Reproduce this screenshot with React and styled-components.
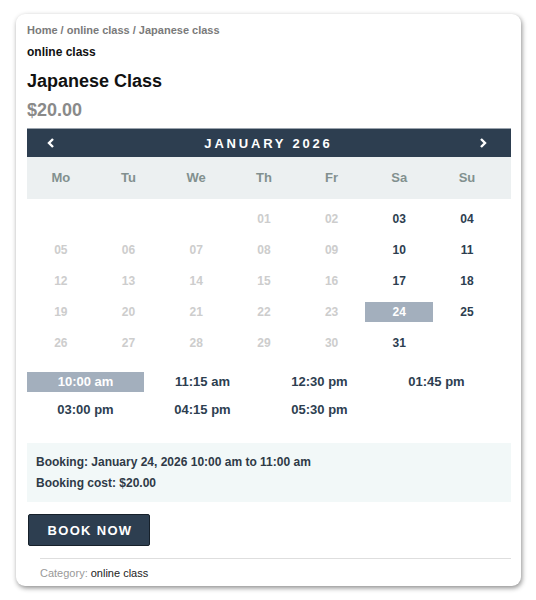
import React from 'react';
import styled, { createGlobalStyle } from 'styled-components';

const GlobalStyle = createGlobalStyle`
  html, body {
    margin: 0;
    padding: 0;
    background: #ffffff;
    font-family: "Liberation Sans", Arial, Helvetica, sans-serif;
  }
`;

const Page = styled.div`
  padding: 14px 15px 14px 16px;
`;

const Card = styled.div`
  background: #fff;
  border-radius: 9px;
  box-shadow: 1px 2px 5px rgba(0, 0, 0, 0.45);
  padding: 9px 10px 6px 11px;
`;

const Crumbs = styled.div`
  font-size: 11px;
  font-weight: bold;
  color: #7a7a7a;
  line-height: 14px;
`;

const Cat = styled.div`
  font-size: 12px;
  font-weight: bold;
  color: #111;
  margin-top: 8px;
  line-height: 14px;
`;

const Title = styled.h1`
  font-size: 18px;
  font-weight: bold;
  color: #111;
  margin: 11px 0 0;
  line-height: 22px;
`;

const Price = styled.div`
  font-size: 18px;
  font-weight: bold;
  color: #8a8a8a;
  margin-top: 7px;
  line-height: 22px;
`;

const CalHead = styled.div`
  margin-top: 7px;
  height: 28px;
  background: #2d3e50;
  border-top: 1px solid #9aa3ad;
  display: flex;
  align-items: center;
  justify-content: space-between;
  padding: 0 24px 0 20px;
  color: #fff;
`;

const MonthTitle = styled.div`
  font-size: 13px;
  font-weight: bold;
  letter-spacing: 2.8px;
  padding-left: 3px;
`;

const Arrow = styled.button`
  background: none;
  border: 0;
  padding: 0;
  display: flex;
  color: #fff;
`;

const WeekRow = styled.div`
  background: #ecf0f1;
  height: 42px;
`;

const Grid = styled.div`
  display: grid;
  grid-template-columns: repeat(7, 67.7px);
  align-items: center;
`;

const WeekDay = styled.div`
  text-align: center;
  font-size: 13px;
  font-weight: bold;
  color: #82908f;
  line-height: 42px;
`;

const Days = styled(Grid)`
  padding-top: 10px;
  row-gap: 11px;
`;

const Day = styled.div`
  text-align: center;
  font-size: 12px;
  font-weight: bold;
  height: 20px;
  line-height: 20px;
  color: ${p => (p.$selected ? '#fff' : p.$off ? '#cdcdcd' : '#2d3e50')};
  background: ${p => (p.$selected ? '#a3afbd' : 'transparent')};
`;

const Times = styled.div`
  display: grid;
  grid-template-columns: repeat(4, 117px);
  row-gap: 8px;
  margin-top: 19px;
`;

const Time = styled.div`
  text-align: center;
  font-size: 13px;
  font-weight: bold;
  height: 20px;
  line-height: 20px;
  color: ${p => (p.$selected ? '#fff' : '#2d3e50')};
  background: ${p => (p.$selected ? '#a3afbd' : 'transparent')};
`;

const Summary = styled.div`
  margin-top: 23px;
  background: #f2f8f8;
  padding: 9px 9px 8px;
  font-size: 12px;
  font-weight: bold;
  color: #2f3a47;
  line-height: 21px;
`;

const BookButton = styled.button`
  display: block;
  margin: 12px 0 0 1px;
  width: 122px;
  height: 32px;
  background: #2d3e50;
  border: 1px solid #16202a;
  border-radius: 2px;
  color: #fff;
  font-family: inherit;
  font-size: 13px;
  font-weight: bold;
  letter-spacing: 1.3px;
  padding: 0 0 0 2px;
`;

const Meta = styled.div`
  margin: 12px 0 0 13px;
  border-top: 1px solid #dedede;
  padding-top: 8px;
  font-size: 11px;
  line-height: 13px;
  color: #222;
`;

const MetaLabel = styled.span`
  color: #999;
`;

const Chevron = ({ dir }) => (
  <svg width="8" height="10" viewBox="0 0 8 10">
    <polyline
      points={dir === 'left' ? '6,1 2,5 6,9' : '2,1 6,5 2,9'}
      fill="none"
      stroke="#fff"
      strokeWidth="2.4"
    />
  </svg>
);

const weekDays = ['Mo', 'Tu', 'We', 'Th', 'Fr', 'Sa', 'Su'];
const times = ['10:00 am', '11:15 am', '12:30 pm', '01:45 pm', '03:00 pm', '04:15 pm', '05:30 pm'];

export default function App() {
  const cells = [];
  for (let i = 0; i < 3; i++) cells.push(null);
  for (let d = 1; d <= 31; d++) cells.push(d);

  return (
    <Page>
      <GlobalStyle />
      <Card>
        <Crumbs>Home / online class / Japanese class</Crumbs>
        <Cat>online class</Cat>
        <Title>Japanese Class</Title>
        <Price>$20.00</Price>

        <CalHead>
          <Arrow aria-label="previous"><Chevron dir="left" /></Arrow>
          <MonthTitle>JANUARY 2026</MonthTitle>
          <Arrow aria-label="next"><Chevron dir="right" /></Arrow>
        </CalHead>
        <WeekRow>
          <Grid>
            {weekDays.map(w => <WeekDay key={w}>{w}</WeekDay>)}
          </Grid>
        </WeekRow>
        <Days>
          {cells.map((d, i) => {
            if (d === null) return <Day key={'e' + i} />;
            const col = i % 7;
            const off = d < 3 || col < 5;
            return (
              <Day key={d} $off={off} $selected={d === 24}>
                {String(d).padStart(2, '0')}
              </Day>
            );
          })}
        </Days>

        <Times>
          {times.map(t => (
            <Time key={t} $selected={t === '10:00 am'}>{t}</Time>
          ))}
        </Times>

        <Summary>
          <div>Booking: January 24, 2026 10:00 am to 11:00 am</div>
          <div>Booking cost: $20.00</div>
        </Summary>

        <BookButton>BOOK NOW</BookButton>

        <Meta>
          <MetaLabel>Category: </MetaLabel>online class
        </Meta>
      </Card>
    </Page>
  );
}
